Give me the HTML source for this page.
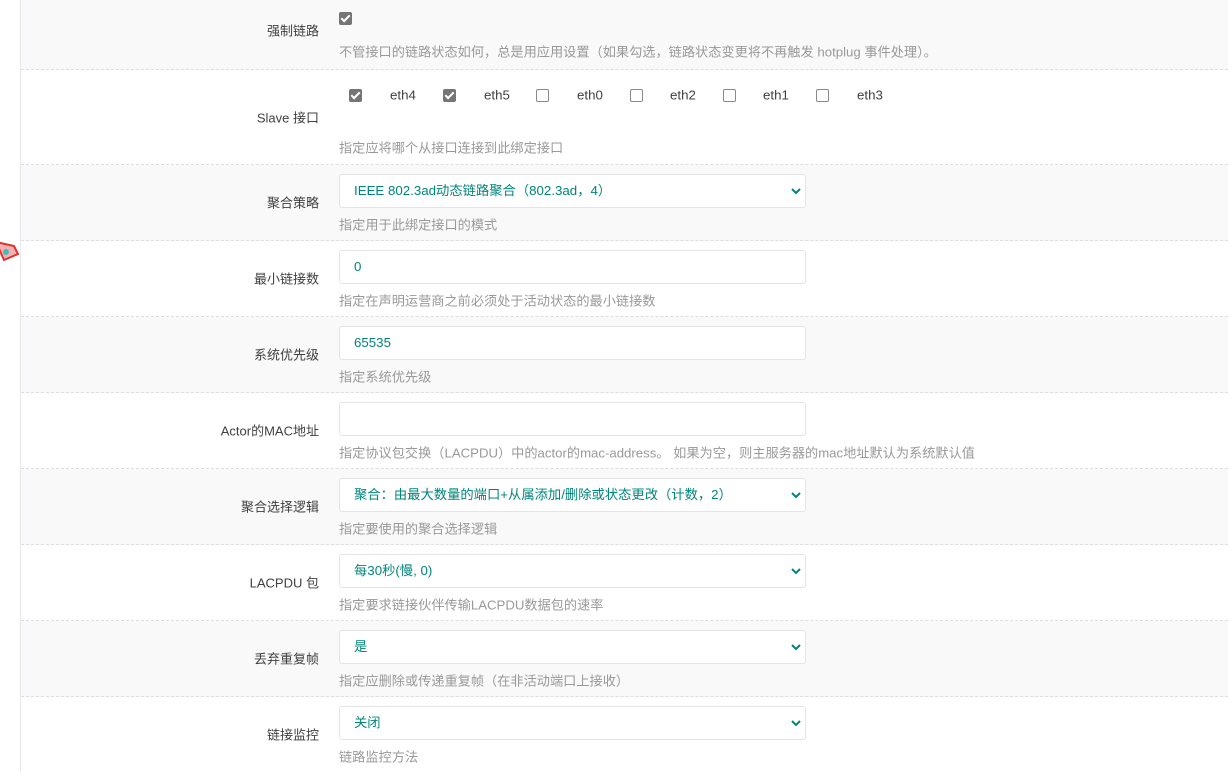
<!DOCTYPE html>
<html><head><meta charset="utf-8"><style>
*{margin:0;padding:0;box-sizing:border-box}
body{width:1228px;height:771px;overflow:hidden;background:#fff;font-family:"Liberation Sans","Noto Sans CJK SC",sans-serif;position:relative;color:#404040}
.bl{position:absolute;left:20px;top:0;width:1px;height:771px;background:#e4e8ec}
.row{position:absolute;left:21px;right:0;border-bottom:1px dashed #ddd}
.g{background:#f9f9f9}
.lbl{position:absolute;right:909px;font-size:13px;color:#404040;white-space:nowrap;transform:translateY(-50%)}
.help{position:absolute;left:318px;font-size:13.2px;color:#999;white-space:nowrap;transform:translateY(-50%)}
.ctl{position:absolute;left:318px;width:467px;height:34px;background:#fff;border:1px solid #e4e4e4;border-radius:3px;font-size:13.3px;color:#00857a;padding-left:14px;line-height:32px;white-space:nowrap}
.ctl svg{position:absolute;right:4px;top:12px}
.cb{position:absolute;width:13px;height:13px;border-radius:2px}
.cb.on{background:#757575}
.cb.off{border:1px solid #8a8a8a;background:#fff}
.cb.on:after{content:"";position:absolute;left:4px;top:1px;width:3px;height:7px;border:solid #fff;border-width:0 2px 2px 0;transform:rotate(45deg)}
.et{position:absolute;font-size:13.3px;color:#404040;transform:translateY(-50%)}
</style></head><body>
<div class="bl"></div>
<svg style="position:absolute;left:0;top:238px" width="20" height="24"><path d="M-4 4 L14 8 L18 16 L4 22 Z" fill="#f6b0b0" stroke="#d33" stroke-width="2"/><circle cx="6" cy="14" r="3" fill="#4bb"/></svg>

<div class="row g" style="top:0;height:70px">
<div class="cb on" style="left:318px;top:12px"></div>
<div class="lbl" style="top:30px">强制链路</div>
<div class="help" style="top:51px">不管接口的链路状态如何，总是用应用设置（如果勾选，链路状态变更将不再触发 hotplug 事件处理）。</div>
</div>
<div class="row" style="top:70px;height:95px">
<div class="cb on" style="left:328px;top:19px"></div><div class="et" style="left:369px;top:25px">eth4</div>
<div class="cb on" style="left:422px;top:19px"></div><div class="et" style="left:463px;top:25px">eth5</div>
<div class="cb off" style="left:515px;top:19px"></div><div class="et" style="left:556px;top:25px">eth0</div>
<div class="cb off" style="left:609px;top:19px"></div><div class="et" style="left:649px;top:25px">eth2</div>
<div class="cb off" style="left:702px;top:19px"></div><div class="et" style="left:742px;top:25px">eth1</div>
<div class="cb off" style="left:795px;top:19px"></div><div class="et" style="left:836px;top:25px">eth3</div>
<div class="lbl" style="top:47px">Slave 接口</div>
<div class="help" style="top:77px">指定应将哪个从接口连接到此绑定接口</div>
</div>
<div class="row g" style="top:165px;height:76px">
<div class="ctl" style="top:9px">IEEE 802.3ad动态链路聚合（802.3ad，4）<svg width="10" height="8"><path d="M1 2 L5 6 L9 2" stroke="#00857a" stroke-width="2" fill="none"/></svg></div>
<div class="lbl" style="top:37px">聚合策略</div>
<div class="help" style="top:59px">指定用于此绑定接口的模式</div>
</div>
<div class="row" style="top:241px;height:76px">
<div class="ctl" style="top:9px">0</div>
<div class="lbl" style="top:37px">最小链接数</div>
<div class="help" style="top:59px">指定在声明运营商之前必须处于活动状态的最小链接数</div>
</div>
<div class="row g" style="top:317px;height:76px">
<div class="ctl" style="top:9px">65535</div>
<div class="lbl" style="top:37px">系统优先级</div>
<div class="help" style="top:59px">指定系统优先级</div>
</div>
<div class="row" style="top:393px;height:76px">
<div class="ctl" style="top:9px"></div>
<div class="lbl" style="top:37px">Actor的MAC地址</div>
<div class="help" style="top:59px">指定协议包交换（LACPDU）中的actor的mac-address。 如果为空，则主服务器的mac地址默认为系统默认值</div>
</div>
<div class="row g" style="top:469px;height:76px">
<div class="ctl" style="top:9px">聚合：由最大数量的端口+从属添加/删除或状态更改（计数，2）<svg width="10" height="8"><path d="M1 2 L5 6 L9 2" stroke="#00857a" stroke-width="2" fill="none"/></svg></div>
<div class="lbl" style="top:37px">聚合选择逻辑</div>
<div class="help" style="top:59px">指定要使用的聚合选择逻辑</div>
</div>
<div class="row" style="top:545px;height:76px">
<div class="ctl" style="top:9px">每30秒(慢, 0)<svg width="10" height="8"><path d="M1 2 L5 6 L9 2" stroke="#00857a" stroke-width="2" fill="none"/></svg></div>
<div class="lbl" style="top:37px">LACPDU 包</div>
<div class="help" style="top:59px">指定要求链接伙伴传输LACPDU数据包的速率</div>
</div>
<div class="row g" style="top:621px;height:76px">
<div class="ctl" style="top:9px">是<svg width="10" height="8"><path d="M1 2 L5 6 L9 2" stroke="#00857a" stroke-width="2" fill="none"/></svg></div>
<div class="lbl" style="top:37px">丢弃重复帧</div>
<div class="help" style="top:59px">指定应删除或传递重复帧（在非活动端口上接收）</div>
</div>
<div class="row" style="top:697px;height:80px;border-bottom:none">
<div class="ctl" style="top:9px">关闭<svg width="10" height="8"><path d="M1 2 L5 6 L9 2" stroke="#00857a" stroke-width="2" fill="none"/></svg></div>
<div class="lbl" style="top:37px">链接监控</div>
<div class="help" style="top:59px">链路监控方法</div>
</div>
</body></html>
